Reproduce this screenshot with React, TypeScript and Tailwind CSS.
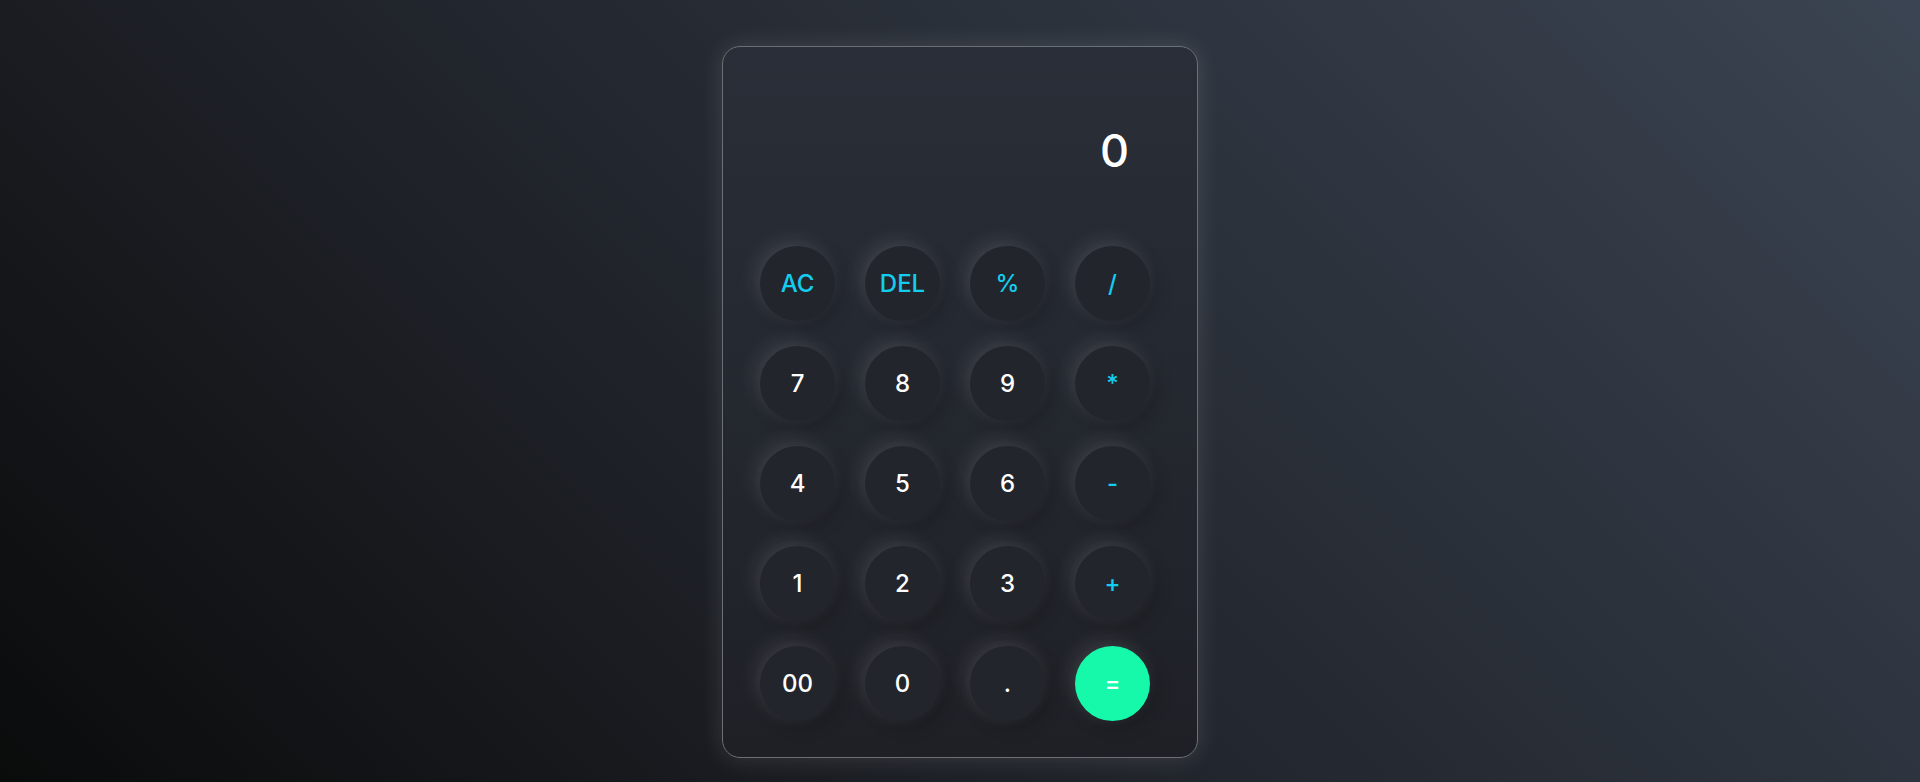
import React from "react";

type Key = { label: string; kind: "num" | "op" | "eq" };

const rows: Key[][] = [
  [
    { label: "AC", kind: "op" },
    { label: "DEL", kind: "op" },
    { label: "%", kind: "op" },
    { label: "/", kind: "op" },
  ],
  [
    { label: "7", kind: "num" },
    { label: "8", kind: "num" },
    { label: "9", kind: "num" },
    { label: "*", kind: "op" },
  ],
  [
    { label: "4", kind: "num" },
    { label: "5", kind: "num" },
    { label: "6", kind: "num" },
    { label: "-", kind: "op" },
  ],
  [
    { label: "1", kind: "num" },
    { label: "2", kind: "num" },
    { label: "3", kind: "num" },
    { label: "+", kind: "op" },
  ],
  [
    { label: "00", kind: "num" },
    { label: "0", kind: "num" },
    { label: ".", kind: "num" },
    { label: "=", kind: "eq" },
  ],
];

function KeyButton({ k }: { k: Key }) {
  const base =
    "w-[75px] h-[75px] rounded-full flex items-center justify-center text-[24px] font-medium leading-none shrink-0 shadow-[-5px_-6px_20px_rgba(255,255,255,0.1),0_0_18px_rgba(255,255,255,0.04),6px_6px_18px_rgba(0,0,0,0.2)]";
  if (k.kind === "eq") {
    return <button className={base + " bg-[#16f8aa] text-white"}>{k.label}</button>;
  }
  return (
    <button
      className={
        base + " bg-[#22252c] " + (k.kind === "op" ? "text-[#14cdee]" : "text-white")
      }
    >
      {k.label}
    </button>
  );
}

export default function App() {
  return (
    <div
      className="w-full h-[782px] overflow-hidden bg-[linear-gradient(45deg,#0a0b0b_0%,#1d2026_35%,#3b4452_100%)] flex justify-center pt-[46px]"
      style={{ fontFamily: "Inter, 'Noto Sans', sans-serif" }}
    >
      <div className="w-[476px] h-[712px] rounded-[18px] border border-[#6c6f75] bg-[linear-gradient(180deg,#292e38_0%,#24282f_50%,#1e2026_100%)] shadow-[0_0_25px_rgba(255,255,255,0.13)] flex flex-col">
        <div className="h-[199px] flex justify-end pr-[68px] pt-[81px]">
          <span className="text-[45px] leading-none font-medium text-white">0</span>
        </div>
        <div className="flex flex-col gap-[25px] pl-[37px]">
          {rows.map((row, i) => (
            <div key={i} className="flex gap-[30px]">
              {row.map((k) => (
                <KeyButton key={k.label} k={k} />
              ))}
            </div>
          ))}
        </div>
      </div>
    </div>
  );
}
